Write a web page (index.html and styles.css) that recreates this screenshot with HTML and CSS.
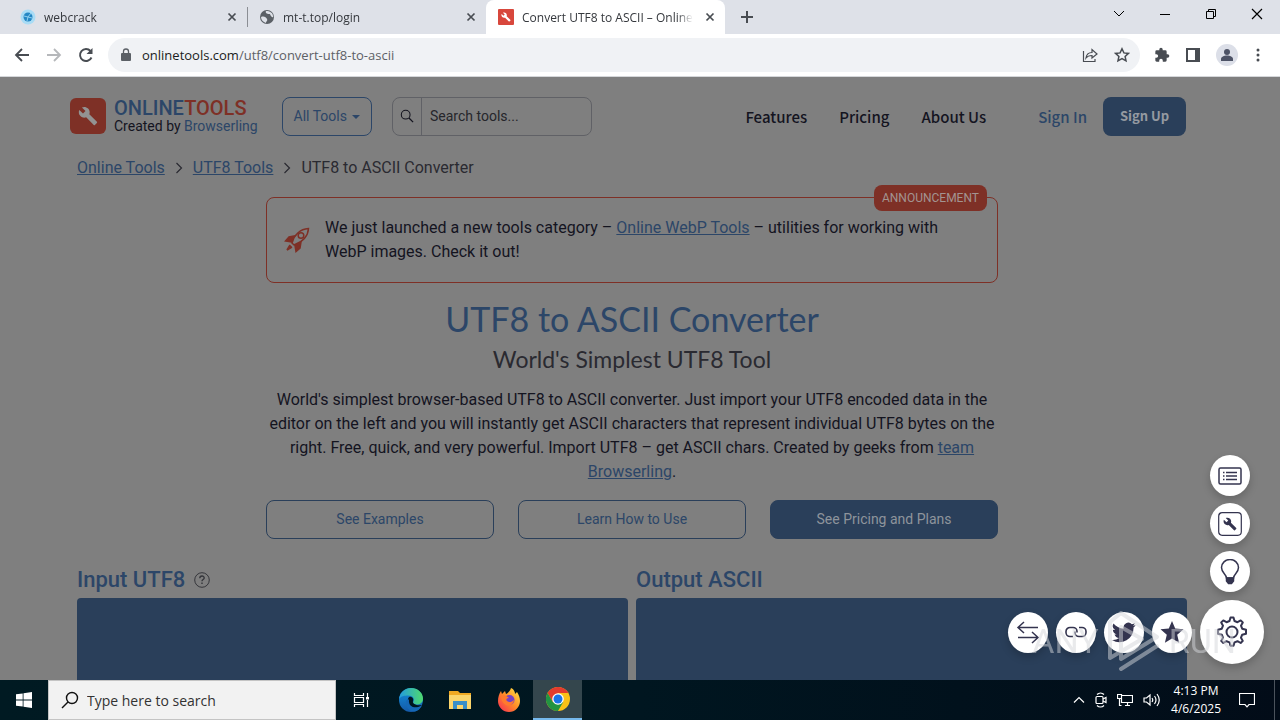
FILE: index.html
```html
<!DOCTYPE html>
<html lang="en">
<head>
    <meta charset="UTF-8">
    <meta name="viewport" content="width=device-width, initial-scale=1.0">
    <title>Convert UTF8 to ASCII – Online UTF8 Tools</title>
    <link rel="stylesheet" href="styles.css">
</head>
<body>
    <!-- shared icon shapes -->
    <svg class="defs" width="0" height="0">
        <symbol id="wrench" viewBox="0 0 24 24"><path d="M22.7 19l-9.1-9.1c.9-2.3.4-5-1.5-6.9-2-2-5-2.4-7.4-1.3L9 6 6 9 1.6 4.7C.4 7.1.9 10.1 2.9 12.1c1.9 1.9 4.6 2.4 6.9 1.5l9.1 9.1c.4.4 1 .4 1.4 0l2.3-2.3c.5-.4.5-1.1.1-1.4z"/></symbol>
        <symbol id="close" viewBox="0 0 10 10"><path d="M1.5 1.5l7 7M8.500 1.500l-7 7" fill="none" stroke="currentColor" stroke-width="1.700"/></symbol>
        <symbol id="search" viewBox="0 0 16 16"><circle cx="6.500" cy="6.500" r="5" fill="none" stroke="currentColor" stroke-width="1.200"/><path d="M10.200 10.200l4.800 4.800" stroke="currentColor" stroke-width="1.500"/></symbol>
        <symbol id="chevron" viewBox="0 0 10 12"><path d="M2.500 1l5 5-5 5" fill="none" stroke="currentColor" stroke-width="1.200"/></symbol>
    </svg>

    <!-- browser tabs -->
    <div class="tabs">
        <div class="tab">
            <svg class="favicon" viewBox="0 0 16 16"><circle cx="8" cy="8" r="7.500" fill="#a9dcf5"/><circle cx="8" cy="8" r="4.500" fill="#2587c4"/><path d="M4 7l4 1 3-4M8 8l-1 4M8 8l4 1" stroke="#8ed0ef" fill="none"/></svg>
            <span class="tab-title">webcrack</span>
            <button class="plain" aria-label="Close tab"><svg width="10" height="10"><use href="#close"/></svg></button>
        </div>
        <div class="tab tab-second">
            <svg class="favicon" viewBox="0 0 16 16"><circle cx="8" cy="8" r="7" fill="#5b6066"/><path d="M2 8c3-1 5 0 6 2s-1 2-1 4C4 13 2 11 2 8zM7 2c-1 2 1 3 3 3s1 2 3 3 1-1 1-1c0-3-3-5-7-5z" fill="#dee1e8"/></svg>
            <span class="tab-title">mt-t.top/login</span>
            <button class="plain" aria-label="Close tab"><svg width="10" height="10"><use href="#close"/></svg></button>
        </div>
        <div class="tab tab-active">
            <svg class="favicon" viewBox="0 0 16 16"><rect width="16" height="16" rx="1" fill="#d8473c"/><use href="#wrench" x="3" y="3" width="10" height="10" fill="#fff"/></svg>
            <span class="tab-title">Convert UTF8 to ASCII – Online U</span>
            <button class="plain" aria-label="Close tab"><svg width="10" height="10"><use href="#close"/></svg></button>
        </div>
        <button class="plain new-tab" aria-label="New tab"><svg width="14" height="14" viewBox="0 0 14 14"><path d="M7 1v12M1 7h12" stroke="currentColor" stroke-width="2"/></svg></button>
        <div class="window-buttons">
            <button class="plain" aria-label="Search tabs"><svg width="12" height="12" viewBox="0 0 12 12"><path d="M1 3l5 5 5-5" fill="none" stroke="currentColor"/></svg></button>
            <button class="plain" aria-label="Minimize"><svg width="12" height="12" viewBox="0 0 12 12"><path d="M1 6.500h10" stroke="currentColor"/></svg></button>
            <button class="plain" aria-label="Restore"><svg width="12" height="12" viewBox="0 0 12 12"><path d="M1.500 3.500h7v7h-7zM3.500 3.500v-2h7v7h-2" fill="none" stroke="currentColor"/></svg></button>
            <button class="plain" aria-label="Close window"><svg width="12" height="12" viewBox="0 0 12 12"><path d="M1 1l10 10M11 1L1 11" stroke="currentColor" stroke-width="1.200"/></svg></button>
        </div>
    </div>

    <!-- address bar -->
    <div class="toolbar">
        <div class="nav-buttons">
            <button class="plain" aria-label="Back"><svg width="16" height="16" viewBox="0 0 16 16"><path d="M15 8H2M8 2L2 8l6 6" fill="none" stroke="currentColor" stroke-width="1.800"/></svg></button>
            <button class="plain disabled" aria-label="Forward"><svg width="16" height="16" viewBox="0 0 16 16"><path d="M1 8h13M8 2l6 6-6 6" fill="none" stroke="currentColor" stroke-width="1.800"/></svg></button>
            <button class="plain" aria-label="Reload"><svg width="16" height="16" viewBox="0 0 16 16"><path d="M13.500 10.500A6 6 0 1 1 12.500 4" fill="none" stroke="currentColor" stroke-width="1.900"/><path d="M14.500 1v6h-6z" fill="currentColor"/></svg></button>
        </div>
        <div class="omnibox">
            <svg width="10" height="14" viewBox="0 0 10 14"><path d="M1 5h8a1 1 0 0 1 1 1v6a1 1 0 0 1-1 1H1a1 1 0 0 1-1-1V6a1 1 0 0 1 1-1z" fill="#5b6066"/><path d="M2.500 5.500V3.500a2.500 2.500 0 0 1 5 0v2" fill="none" stroke="#5b6066" stroke-width="1.300"/></svg>
            <span class="url"><b>onlinetools.com</b>/utf8/convert-utf8-to-ascii</span>
            <button class="plain" aria-label="Share"><svg width="16" height="16" viewBox="0 0 16 16"><path d="M1.500 4v10.500H13V12M4 11c.5-4 3-5.500 6-5.500V2.500L15 7l-5 4V8.500c-3 0-4.500.5-6 2.500z" fill="none" stroke="currentColor" stroke-width="1.200"/></svg></button>
            <button class="plain" aria-label="Bookmark"><svg width="16" height="16" viewBox="0 0 16 16"><path d="M8 1.800l1.900 4.100 4.500.5-3.300 3 .9 4.400L8 11.600l-4 2.200.9-4.400-3.300-3 4.500-.5z" fill="none" stroke="currentColor" stroke-width="1.500"/></svg></button>
        </div>
        <div class="browser-actions">
            <button class="plain" aria-label="Extensions"><svg width="16" height="16" viewBox="0 0 24 24"><path fill="currentColor" d="M20.500 11H19V7a2 2 0 0 0-2-2h-4V3.500a2.500 2.500 0 0 0-5 0V5H4a2 2 0 0 0-2 2v3.800h1.500a2.700 2.700 0 0 1 0 5.400H2V20c0 1.100.9 2 2 2h3.800v-1.500a2.700 2.700 0 0 1 5.400 0V22H17a2 2 0 0 0 2-2v-4h1.500a2.500 2.500 0 0 0 0-5z"/></svg></button>
            <button class="plain" aria-label="Side panel"><svg width="14" height="14" viewBox="0 0 14 14"><path d="M1 1h12v12H1z" fill="none" stroke="currentColor" stroke-width="2"/><path d="M9 1h4v12H9z" fill="currentColor"/></svg></button>
            <button class="plain" aria-label="Profile"><svg width="22" height="22" viewBox="0 0 22 22"><circle cx="11" cy="11" r="11" fill="#dcdfe8"/><circle cx="11" cy="8" r="3" fill="#4d5366"/><path d="M5 17v-2c0-2 3-3.500 6-3.500s6 1.500 6 3.500v2z" fill="#4d5366"/></svg></button>
            <button class="plain" aria-label="Menu"><svg width="8" height="14" viewBox="0 0 8 14" fill="currentColor"><circle cx="4" cy="2" r="1.500"/><circle cx="4" cy="7" r="1.500"/><circle cx="4" cy="12" r="1.500"/></svg></button>
        </div>
    </div>

    <!-- site -->
    <div class="page">
        <header class="site-header">
            <a href="#" class="logo" aria-label="Online Tools"><svg width="20" height="20" fill="#939393"><use href="#wrench"/></svg></a>
            <div class="brand">
                <div class="brand-name">ONLINE<span>TOOLS</span></div>
                <div class="brand-by">Created by <a href="#">Browserling</a></div>
            </div>
            <button class="all-tools">All Tools <i class="caret"></i></button>
            <div class="search">
                <label for="search-tools" aria-label="Search tools"><svg width="14" height="14"><use href="#search"/></svg></label>
                <input type="text" id="search-tools" placeholder="Search tools...">
            </div>
            <nav class="site-nav">
                <a href="#">Features</a>
                <a href="#">Pricing</a>
                <a href="#">About Us</a>
            </nav>
            <a href="#" class="sign-in">Sign In</a>
            <a href="#" class="sign-up">Sign Up</a>
        </header>

        <div class="container">
            <div class="breadcrumb">
                <a href="#">Online Tools</a>
                <svg width="10" height="12"><use href="#chevron"/></svg>
                <a href="#">UTF8 Tools</a>
                <svg width="10" height="12"><use href="#chevron"/></svg>
                <span>UTF8 to ASCII Converter</span>
            </div>

            <main class="intro">
                <div class="announcement">
                    <span class="badge">ANNOUNCEMENT</span>
                    <svg width="26" height="26" viewBox="0 0 26 26" fill="none" stroke="#7e3026" stroke-width="1.500">
                        <path d="M8 16C10 8 16 2 24.500 1.500 24 10 18 15 10 18z"/><circle cx="17" cy="8.500" r="2.800"/>
                        <path d="M10 9L5 10 1.500 14 7.500 15zM17 15l-1 6-4 3.500-1-6z" fill="#7e3026"/><path d="M6 18l-3 5 5-3" fill="#7e3026"/>
                    </svg>
                    <p>We just launched a new tools category – <a href="#">Online WebP Tools</a> – utilities for working with WebP images. Check it out!</p>
                </div>
                <h1>UTF8 to ASCII Converter</h1>
                <h2>World's Simplest UTF8 Tool</h2>
                <p class="description">World's simplest browser-based UTF8 to ASCII converter. Just import your UTF8 encoded data in the editor on the left and you will instantly get ASCII characters that represent individual UTF8 bytes on the right. Free, quick, and very powerful. Import UTF8 – get ASCII chars. Created by geeks from <a href="#">team Browserling</a>.</p>
                <div class="actions">
                    <a href="#">See Examples</a>
                    <a href="#">Learn How to Use</a>
                    <a href="#" class="filled">See Pricing and Plans</a>
                </div>
            </main>

            <div class="editors">
                <section>
                    <h3>Input UTF8 <svg width="16" height="16" viewBox="0 0 16 16" fill="none" stroke="#35363b"><circle cx="8" cy="8" r="7.300"/><path d="M5.800 6.300c0-3 4.400-3 4.400-.3 0 1.600-2.200 1.500-2.200 3.300M8 10.500V12" stroke-width="1.400"/></svg></h3>
                    <div class="editor"></div>
                </section>
                <section>
                    <h3>Output ASCII</h3>
                    <div class="editor"></div>
                </section>
            </div>
        </div>
    </div>

    <!-- floating tool menu -->
    <div class="fab-menu">
        <div class="fab-column">
            <button class="fab" aria-label="List"><svg width="24" height="18" viewBox="0 0 24 18" fill="none" stroke="currentColor" stroke-width="1.500"><rect x="1" y="1" width="22" height="16" rx="1.500"/><path d="M8 5.500h11M8 9h11M8 12.500h11M5 5.500h1.500M5 9h1.500M5 12.500h1.500"/></svg></button>
            <button class="fab" aria-label="Tools"><svg width="24" height="24" viewBox="0 0 24 24"><rect x=".7" y=".7" width="22.600" height="22.600" rx="3.500" fill="none" stroke="currentColor" stroke-width="1.200"/><use href="#wrench" x="5" y="5" width="14" height="14" fill="currentColor"/></svg></button>
            <button class="fab" aria-label="Ideas"><svg width="20" height="26" viewBox="0 0 20 26" fill="none" stroke="currentColor" stroke-width="1.500"><path d="M6.500 19c0-4-5-5-5-10.500a8.500 8 0 0 1 17 0c0 5.500-5 6.500-5 10.500z"/><path d="M6.500 19h7v3l-2 2.500h-3l-2-2.500z" fill="currentColor"/></svg></button>
        </div>
        <div class="fab-row">
            <button class="fab" aria-label="Swap"><svg width="24" height="24" viewBox="0 0 24 24" fill="none" stroke="currentColor" stroke-width="1.500"><path d="M22 7.500H2M8 2L2 7.500 8 13M2 17.500h20M16 12l6 5.500-6 5.500"/></svg></button>
            <button class="fab" aria-label="Copy link"><svg width="22" height="12" viewBox="0 0 22 12" fill="none" stroke="currentColor" stroke-width="1.600"><path d="M8 10.500H5a4 4 0 0 1-4-4v-1a4 4 0 0 1 4-4h3a4 4 0 0 1 4 4v1M14 1.500h3a4 4 0 0 1 4 4v1a4 4 0 0 1-4 4h-3a4 4 0 0 1-4-4v-1"/></svg></button>
            <button class="fab" aria-label="Twitter"><svg width="24" height="24" viewBox="0 0 24 24"><path fill="currentColor" d="M23.600 4.900c-.9.400-1.800.7-2.800.8 1-.6 1.800-1.600 2.200-2.700-.9.600-2 1-3.100 1.200A4.900 4.900 0 0 0 11.600 8.700C7.500 8.500 3.900 6.500 1.500 3.600A4.900 4.900 0 0 0 3 10.100c-.8 0-1.600-.2-2.200-.6v.1c0 2.400 1.700 4.400 3.900 4.800-.7.200-1.500.2-2.200.1.600 2 2.400 3.400 4.600 3.400A9.900 9.900 0 0 1 0 20a14 14 0 0 0 21.500-12.400c.8-.8 1.600-1.700 2.100-2.700z"/></svg></button>
            <button class="fab" aria-label="Favorite"><svg width="24" height="24" viewBox="0 0 24 24"><path fill="currentColor" d="M12 1l3.200 7.500 8.300.8-6.300 5.400 1.900 8.100L12 18.500l-7.100 4.300 1.900-8.100L.5 9.300l8.300-.8z"/></svg></button>
            <button class="fab fab-big" aria-label="Settings"><svg width="32" height="32" viewBox="0 0 32 32" fill="none" stroke="currentColor" stroke-width="2"><circle cx="16" cy="16" r="5.500"/><path d="M13.500 5l1-3.500h3l1 3.500 3 1.200 3.200-1.800 2.100 2.100-1.800 3.200 1.200 3 3.800 1v4l-3.800 1-1.200 3 1.800 3.200-2.100 2.100-3.200-1.800-3 1.200-1 3.300h-3l-1-3.300-3-1.200-3.200 1.800-2.100-2.100L7 21.700l-1.200-3-3.800-1v-4l3.800-1 1.200-3-1.800-3.200 2.100-2.100 3.200 1.800z" stroke-linejoin="round"/></svg></button>
        </div>
    </div>

    <div class="watermark">
        <span>ANY</span>
        <svg width="54" height="62" viewBox="0 0 54 62" fill="none" stroke="currentColor" stroke-width="4" stroke-linejoin="round" stroke-linecap="round"><path d="M3 48V12L14 3l36 24-36 22V17l21 12M3 48l32-19M14 59l36-23"/></svg>
        <span>RUN</span>
    </div>

    <!-- taskbar -->
    <div class="taskbar">
        <button class="task start" aria-label="Start"><svg width="16" height="16" viewBox="0 0 16 16" fill="#fff"><path d="M0 2.300l6.700-.9v6.200H0zM7.500 1.300L16 0v7.600H7.500zM0 8.400h6.700v6.200L0 13.700zM7.500 8.400H16V16l-8.500-1.300z"/></svg></button>
        <div class="task-search">
            <label for="task-search" aria-label="Search"><svg width="18" height="18" viewBox="0 0 18 18" fill="none" stroke="#111" stroke-width="1.400"><circle cx="11" cy="7" r="5.500"/><path d="M7 11l-6 6"/></svg></label>
            <input type="text" id="task-search" placeholder="Type here to search">
        </div>
        <button class="task" aria-label="Task view"><svg width="18" height="18" viewBox="0 0 18 18" fill="none" stroke="#fff" stroke-width="1.200"><path d="M1.500 2v2.500h9V2M1.500 16v-2.500h9V16M1.500 6.500h9v5h-9zM14.500 2v4M14.500 9v7"/><path d="M13 6h3v2.500h-3z" fill="#fff" stroke="none"/></svg></button>
        <button class="task" aria-label="Edge"><svg width="24" height="24" viewBox="0 0 24 24">
            <defs><linearGradient id="edge-top"><stop offset="0" stop-color="#229be0"/><stop offset="1" stop-color="#4fda6e"/></linearGradient><linearGradient id="edge-low" x2="0" y2="1"><stop offset="0" stop-color="#1390dc"/><stop offset="1" stop-color="#1459a8"/></linearGradient></defs>
            <circle cx="12" cy="12" r="12" fill="url(#edge-low)"/><path d="M0 11C1 4 6 0 12 0c7 0 12 5 12 10.500 0 4-3 6-6.500 6-3 0-4-1.500-3-3 1.500-3-1-6-5-6C5 7.500 2 8 0 11z" fill="url(#edge-top)"/><path d="M10 9c-3 4-1 11 6 11 3 0 5-1 7-3-5 1-10-1-9-4 1-2-1-5-4-4z" fill="#001620"/><path d="M7 13c-1 6 4 11 9 10.500 3-.5 5-2.500 7-6-5 3-14 3-13-6-1 0-2.500 0-3 1.500z" fill="#1568b7"/></svg></button>
        <button class="task" aria-label="File Explorer"><svg width="22" height="18" viewBox="0 0 22 18"><path d="M0 0h9l2 2h11v16H0z" fill="#f0a922"/><path d="M0 4h22v14H0z" fill="#fbd56b"/><path d="M4 18v-8h14v8h-4v-4H8v4z" fill="#398fc8"/></svg></button>
        <button class="task" aria-label="Firefox"><svg width="24" height="24" viewBox="0 0 24 24">
            <defs><linearGradient id="fox" x1="1" y1="0" x2="0" y2="1"><stop offset="0" stop-color="#ffec45"/><stop offset=".5" stop-color="#ff8a28"/><stop offset="1" stop-color="#f62558"/></linearGradient></defs>
            <path d="M1 13C1 9 2 6 4 3l1 3 3-3 1 3c2-1 4-3 5-6 3 1 4 4 4 6l2-2c2 3 3 6 3 9a11 11 0 0 1-22 0z" fill="url(#fox)"/><circle cx="12.500" cy="12" r="5" fill="#7542c4"/><path d="M4 8c3-2 6 0 8 2-3 0-3 2-2 3 2 2 5 1 7-1-1 8-12 8-13-4z" fill="#ff7a2d"/></svg></button>
        <button class="task task-current" aria-label="Chrome"><svg width="24" height="24" viewBox="0 0 24 24"><circle cx="12" cy="12" r="12" fill="#fbc116"/><path d="M1.600 6A12 12 0 0 1 22.400 6H12l-5.200 9z" fill="#e33b2e"/><path d="M1.600 6A12 12 0 0 0 12 24l5.200-9H6.800z" fill="#229342"/><circle cx="12" cy="12" r="5.800" fill="#fff"/><circle cx="12" cy="12" r="4.500" fill="#1a73e8"/></svg></button>
        <div class="tray">
            <svg width="12" height="12" viewBox="0 0 12 12"><path d="M1 8.500l5-5 5 5"/></svg>
            <svg width="12" height="16" viewBox="0 0 12 16"><rect x="1" y="4.500" width="7" height="7" rx="1"/><path d="M8 7l3-1.500v5L8 9M2 2.500C4 .5 7 .5 9 2.500M2 13.500c2 2 5 2 7 0"/></svg>
            <svg width="16" height="14" viewBox="0 0 16 14"><path d="M5 2.500h10.500v7H4.500V6M8 12.500h5M10.500 9.500v3M.5 1.500h4v4h-4zM2.500 5.500v7h2"/></svg>
            <svg width="18" height="14" viewBox="0 0 18 14"><path d="M1 5h2.500L7 2v10L3.500 9H1zM9 5q1.500 2 0 4M11.500 3q3 4 0 8M14 1q4.500 6 0 12"/></svg>
            <div class="clock">4:13 PM<br>4/6/2025</div>
            <svg width="16" height="16" viewBox="0 0 16 16"><path d="M.5 1.500h15v11H10L8 14.800 6 12.500H.5z"/></svg>
        </div>
    </div>
</body>
</html>
```
FILE: styles.css
```css
* {
    box-sizing: border-box;
}
body {
    display: flex;
    flex-direction: column;
    height: 100vh;
    margin: 0;
    overflow: hidden;
    background-color: #7f7f7f;
    font-family: Roboto, "Liberation Sans", sans-serif;
    font-size: 16px;
    color: #14141f;
}
a {
    color: #2c4668;
}
h1, h2, h3, p {
    margin: 0;
}
.defs {
    position: absolute;
}
.plain {
    display: flex;
    align-items: center;
    justify-content: center;
    padding: 0;
    border: none;
    background: none;
    color: #484c52;
}

/* browser tabs */
.tabs {
    display: flex;
    flex: none;
    height: 34px;
    background-color: #dee1e8;
    font-family: "Open Sans", sans-serif;
    font-size: 12px;
    color: #35383d;
}
.tab {
    display: flex;
    align-items: center;
    flex: 0 1 239px;
    min-width: 0;
    padding: 0 10px 0 12px;
}
.tab:first-child {
    flex-basis: 247px;
    padding-left: 20px;
}
.tab-second {
    background: linear-gradient(#8b8e94, #8b8e94) 0 50% / 1px 20px no-repeat;
}
.tab-active {
    border-radius: 8px 8px 0 0;
    background-color: #fff;
}
.favicon {
    flex: none;
    width: 16px;
    height: 16px;
}
.tab-title {
    flex: 1;
    margin: 0 12px 0 8px;
    overflow: hidden;
    white-space: nowrap;
    -webkit-mask-image: linear-gradient(to left, transparent, #000 16px);
    mask-image: linear-gradient(to left, transparent, #000 16px);
}
.new-tab {
    width: 44px;
}
.window-buttons {
    display: flex;
    align-items: center;
    gap: 34px;
    margin: 0 17px 6px auto;
}
.window-buttons .plain {
    color: #000;
}

/* address bar */
.toolbar {
    display: flex;
    flex: none;
    align-items: center;
    height: 43px;
    padding: 0 18px 0 14px;
    border-bottom: 1px solid #d5d7da;
    background-color: #fff;
}
.nav-buttons {
    display: flex;
    gap: 16px;
    margin-right: 14px;
}
.disabled {
    color: #b6b8bb;
}
.omnibox {
    display: flex;
    flex: 1;
    align-items: center;
    gap: 16px;
    height: 34px;
    padding: 0 10px 0 13px;
    border-radius: 17px;
    background-color: #f0f2f5;
}
.url {
    flex: 1;
    margin-left: -5px;
    font-family: "Open Sans", sans-serif;
    font-size: 13px;
    color: #5d6166;
}
.url b {
    font-weight: 400;
    color: #1b1d20;
}
.browser-actions {
    display: flex;
    align-items: center;
    gap: 16px;
    margin-left: 14px;
}

/* site header */
.page {
    flex: 1;
    min-height: 0;
    overflow: hidden;
    padding: 19px 16px 0 0;
}
.site-header {
    display: flex;
    align-items: center;
    max-width: 1124px;
    height: 40px;
    margin: 0 auto;
    padding-right: 8px;
}
.logo {
    display: flex;
    align-items: center;
    justify-content: center;
    width: 36px;
    height: 36px;
    margin-right: 8px;
    border-radius: 6px;
    background-color: #7e3026;
}
.brand {
    width: 168px;
}
.brand-name {
    font-size: 20px;
    font-weight: 500;
    line-height: 20px;
    color: #2c4668;
}
.brand-name span {
    color: #7e3026;
}
.brand-by {
    font-size: 14px;
    line-height: 16px;
}
.brand-by a, .site-nav a, .sign-in, .sign-up, .actions a {
    text-decoration: none;
}
.all-tools {
    width: 90px;
    height: 39px;
    margin-right: 20px;
    border: 1px solid #2c4668;
    border-radius: 8px;
    background: none;
    font-family: inherit;
    font-size: 14px;
    color: #2c4668;
}
.caret {
    display: inline-block;
    margin-left: 2px;
    border: 4px solid transparent;
    border-top-color: #2c4668;
    border-bottom: none;
    vertical-align: middle;
}
.search {
    display: flex;
    width: 200px;
    height: 39px;
    border: 1px solid #606166;
    border-radius: 8px;
}
.search label {
    display: flex;
    align-items: center;
    justify-content: center;
    width: 29px;
    border-right: 1px solid #606166;
}
.search input, .task-search input {
    flex: 1;
    min-width: 0;
    padding: 0 8px;
    border: none;
    outline: none;
    background: none;
    font-family: inherit;
    font-size: 14px;
}
.search input::placeholder {
    color: #26262b;
}
.site-nav {
    display: flex;
    gap: 32px;
    margin-left: auto;
}
.site-nav, .sign-in, .sign-up {
    font-family: "Noto Sans CJK JP", "Noto Sans", sans-serif;
    font-size: 15px;
    font-weight: 500;
}
.site-nav a {
    color: #14141f;
}
.sign-in {
    margin: 0 16px 0 52px;
}
.sign-up {
    width: 83px;
    height: 39px;
    border-radius: 8px;
    background-color: #2a3f5a;
    font-size: 13px;
    font-weight: 700;
    line-height: 37px;
    text-align: center;
    color: #959aa1;
}

/* content */
.container {
    max-width: 1110px;
    margin: 0 auto;
}
.breadcrumb {
    display: flex;
    align-items: center;
    gap: 9px;
    margin-top: 20px;
    line-height: 24px;
}
.breadcrumb svg {
    color: #2a2a31;
}
.breadcrumb span {
    color: #2a2a31;
}
.intro {
    max-width: 732px;
    margin: 17px auto 0;
    line-height: 24px;
    text-align: center;
}
.announcement {
    display: flex;
    align-items: center;
    gap: 15px;
    position: relative;
    height: 86px;
    padding: 0 40px 0 17px;
    border: 1px solid #7e3026;
    border-radius: 8px;
    text-align: left;
}
.announcement svg {
    flex: none;
}
.badge {
    position: absolute;
    top: -13px;
    right: 10px;
    padding: 0 8px;
    border-radius: 8px;
    background-color: #7e3026;
    font-size: 12px;
    line-height: 26px;
    color: #a39491;
}
h1, h2 {
    font-family: Lato, Inter, sans-serif;
    font-weight: 400;
}
h1 {
    margin-top: 14px;
    font-size: 34px;
    line-height: 44px;
    color: #2c4668;
}
h2 {
    margin-top: 4px;
    font-size: 23px;
    line-height: 28px;
    color: #2a2a31;
}
.description {
    margin-top: 15px;
}
.actions {
    display: grid;
    grid-template-columns: repeat(3, 1fr);
    gap: 24px;
    margin-top: 16px;
}
.actions a {
    height: 39px;
    border: 1px solid #2a3f5a;
    border-radius: 8px;
    font-size: 14px;
    line-height: 37px;
}
.actions .filled {
    background-color: #2a3f5a;
    color: #8e949c;
}
.editors {
    display: grid;
    grid-template-columns: 1fr 1fr;
    gap: 8px;
    margin-top: 27px;
}
.editors h3 {
    display: flex;
    align-items: center;
    gap: 9px;
    font-size: 22px;
    font-weight: 500;
    line-height: 28px;
    color: #2c4668;
}
.editor {
    height: 300px;
    margin-top: 4px;
    border-radius: 4px;
    background-color: #2a3f5a;
}

/* floating buttons, lie over the page */
.fab-menu {
    display: flex;
    flex-direction: column;
    gap: 8px;
    position: fixed;
    right: 16px;
    bottom: 56px;
}
.fab-column {
    display: flex;
    flex-direction: column;
    align-self: flex-end;
    gap: 7px;
    margin-right: 14px;
}
.fab-row {
    display: flex;
    align-items: center;
    gap: 8px;
}
.fab {
    display: flex;
    align-items: center;
    justify-content: center;
    width: 40px;
    height: 41px;
    padding: 0;
    border: none;
    border-radius: 50%;
    background-color: #fff;
    box-shadow: 0 4px 8px rgba(0, 0, 0, 0.2);
    color: #34344f;
}
.fab-big {
    width: 64px;
    height: 64px;
}
.watermark {
    display: flex;
    align-items: center;
    gap: 8px;
    position: fixed;
    right: 44px;
    bottom: 48px;
    opacity: 0.5;
    font-family: "Liberation Sans Narrow", Roboto, sans-serif;
    font-size: 34px;
    font-weight: 400;
    color: #d4d6da;
    pointer-events: none;
}

/* taskbar */
.taskbar {
    display: flex;
    flex: none;
    height: 40px;
    background: linear-gradient(90deg, #001a22, #001620 50%, #020c18);
    font-family: "Open Sans", sans-serif;
}
.task {
    display: flex;
    align-items: center;
    justify-content: center;
    width: 49px;
    padding: 0;
    border: none;
    background: none;
}
.start {
    width: 48px;
}
.task-current {
    border-bottom: 2px solid #76b9ed;
    background-color: #34464d;
}
.task-search {
    display: flex;
    align-items: center;
    width: 288px;
    margin-right: 1px;
    padding-left: 12px;
    border: 1px solid #c4c4c4;
    background-color: #f2f2f2;
}
.task-search label {
    display: flex;
}
.task-search input::placeholder {
    color: #333;
}
.tray {
    display: flex;
    align-items: center;
    gap: 10px;
    margin-left: auto;
    margin-right: 5px;
    padding-right: 19px;
    border-right: 1px solid #4b535c;
    color: #fff;
}
.tray svg {
    fill: none;
    stroke: #fff;
    stroke-width: 1.2;
}
.clock {
    margin-right: 8px;
    font-size: 12px;
    line-height: 18px;
    text-align: center;
}
```
